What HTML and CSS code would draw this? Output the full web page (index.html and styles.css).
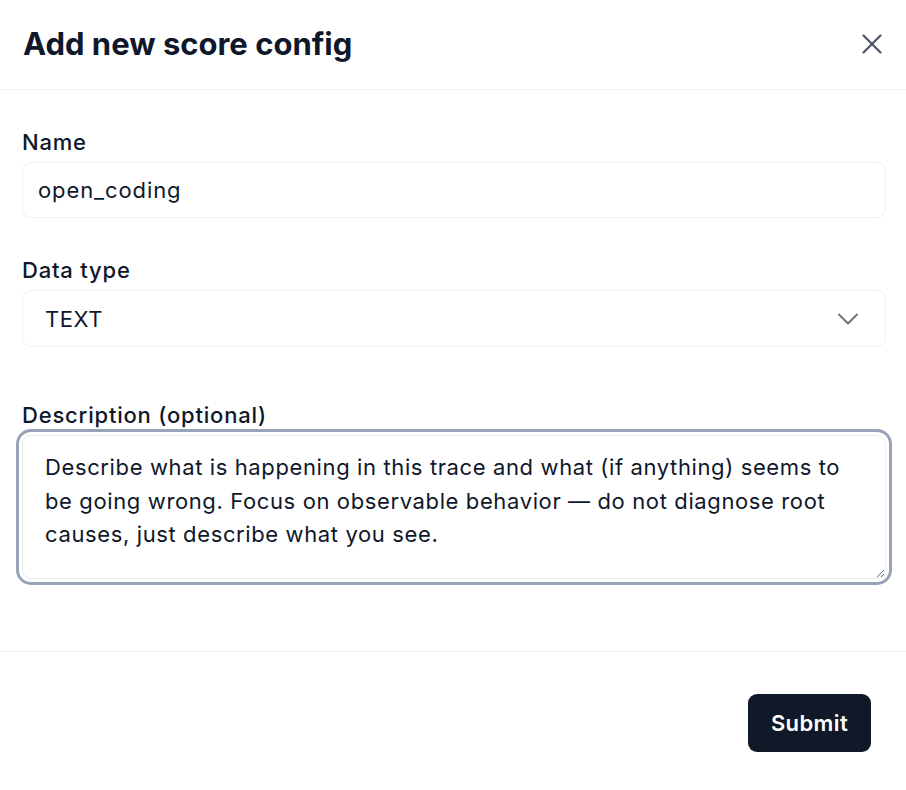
FILE: index.html
```html
<!DOCTYPE html>
<html lang="en">
<head>
<meta charset="utf-8">
<title>Add new score config</title>
<link rel="stylesheet" href="styles.css">
</head>
<body>
<div class="dialog">
  <header class="dlg-header">
    <h2 class="dlg-title">Add new score config</h2>
    <button class="close-btn" aria-label="Close">
      <svg viewBox="0 0 24 24" width="34" height="34" fill="none" stroke="currentColor" stroke-width="1.5" stroke-linecap="round" stroke-linejoin="round"><path d="M18 6 6 18"/><path d="m6 6 12 12"/></svg>
    </button>
  </header>
  <form class="dlg-body">
    <div class="field">
      <label class="field-label">Name</label>
      <div class="text-input">open_coding</div>
    </div>
    <div class="field">
      <label class="field-label">Data type</label>
      <div class="select">
        <span>TEXT</span>
        <svg viewBox="0 0 24 24" width="36" height="36" fill="none" stroke="currentColor" stroke-width="1.3" stroke-linecap="round" stroke-linejoin="round"><path d="m6 9 6 6 6-6"/></svg>
      </div>
    </div>
    <div class="field field-desc">
      <label class="field-label">Description (optional)</label>
      <textarea class="textarea" readonly>Describe what is happening in this trace and what (if anything) seems to be going wrong. Focus on observable behavior — do not diagnose root causes, just describe what you see.</textarea>
    </div>
  </form>
  <footer class="dlg-footer">
    <button class="submit-btn" type="button">Submit</button>
  </footer>
</div>
</body>
</html>
```

FILE: styles.css
```css
* { box-sizing: border-box; }

html, body {
  margin: 0;
  background: #ffffff;
}

body {
  font-family: Inter, "Noto Sans", "Liberation Sans", sans-serif;
  color: #0f172a;
}

.dialog {
  width: 906px;
}

.dlg-header {
  height: 90px;
  display: flex;
  align-items: center;
  justify-content: space-between;
  padding: 0 17px 2px 23px;
  border-bottom: 1px solid #eef1f5;
}

.dlg-title {
  margin: 0;
  font-size: 31px;
  font-weight: 700;
  letter-spacing: 0;
  line-height: 36px;
  color: #0f172a;
}

.close-btn {
  display: flex;
  padding: 0;
  border: 0;
  background: transparent;
  color: #4b5563;
}

.dlg-body {
  padding: 38px 20px 72px 22px;
  display: flex;
  flex-direction: column;
}

.field {
  display: flex;
  flex-direction: column;
}

.field + .field {
  margin-top: 38px;
}

.field.field-desc {
  margin-top: 54px;
}

.field-label {
  font-size: 22px;
  font-weight: 500;
  line-height: 28px;
  letter-spacing: 0.8px;
  margin-bottom: 6px;
  color: #0f172a;
}

.text-input {
  height: 56px;
  border: 1px solid #eef1f5;
  border-radius: 9px;
  padding: 0 15px;
  display: flex;
  align-items: center;
  font-size: 22px;
  letter-spacing: 0.9px;
  color: #0f172a;
}

.select {
  height: 57px;
  border: 1px solid #eef1f5;
  border-radius: 9px;
  padding: 0 19px 0 22px;
  display: flex;
  align-items: center;
  justify-content: space-between;
  font-size: 22px;
  letter-spacing: 0.6px;
  color: #0f172a;
}

.select svg {
  color: #6b7280;
}

.textarea {
  display: block;
  width: 100%;
  height: 144px;
  margin: 0;
  border: 1px solid #e8ecf1;
  border-radius: 9px;
  padding: 15px 22px;
  font-family: inherit;
  font-size: 22px;
  letter-spacing: 0.62px;
  line-height: 33.5px;
  color: #0f172a;
  background: #fff;
  outline: none;
  box-shadow: 0 0 0 3px #ffffff, 0 0 0 6px #97a3b7;
  resize: vertical;
}

.dlg-footer {
  border-top: 1px solid #eef1f5;
  display: flex;
  justify-content: flex-end;
  padding: 42px 35px 0 0;
}

.submit-btn {
  height: 58px;
  width: 123px;
  border: 0;
  border-radius: 9px;
  background: #111827;
  color: #ffffff;
  font-family: inherit;
  font-size: 22px;
  font-weight: 600;
  letter-spacing: 0.4px;
}
```
